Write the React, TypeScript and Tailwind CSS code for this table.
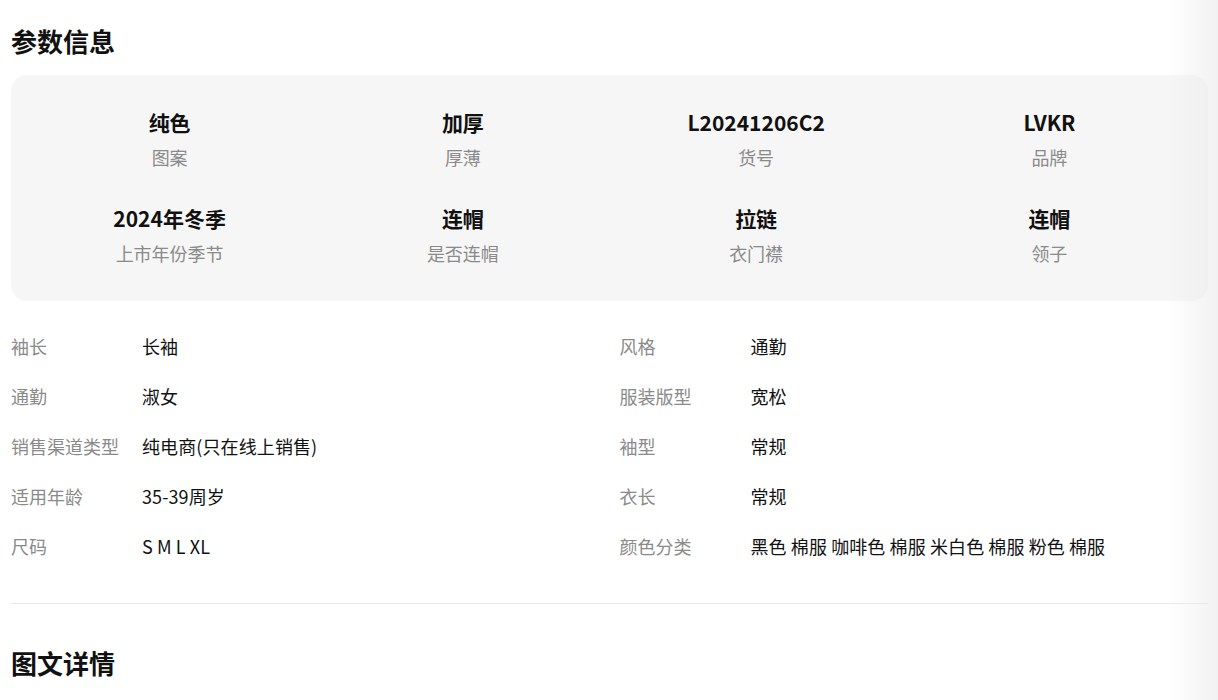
const summary = [
  { value: '纯色', label: '图案' },
  { value: '加厚', label: '厚薄' },
  { value: 'L20241206C2', label: '货号' },
  { value: 'LVKR', label: '品牌' },
  { value: '2024年冬季', label: '上市年份季节' },
  { value: '连帽', label: '是否连帽' },
  { value: '拉链', label: '衣门襟' },
  { value: '连帽', label: '领子' },
]

const specs = [
  ['袖长', '长袖'],
  ['风格', '通勤'],
  ['通勤', '淑女'],
  ['服装版型', '宽松'],
  ['销售渠道类型', '纯电商(只在线上销售)'],
  ['袖型', '常规'],
  ['适用年龄', '35-39周岁'],
  ['衣长', '常规'],
  ['尺码', 'S M L XL'],
  ['颜色分类', '黑色 棉服 咖啡色 棉服 米白色 棉服 粉色 棉服'],
]

export default function App() {
  return (
    <div
      className="relative min-h-[700px] bg-white pl-[11px] pr-[10px] text-[#111]"
      style={{ fontFamily: '"Noto Sans CJK SC", "Noto Sans", sans-serif' }}
    >
      <h2 className="pt-[23px] text-[26px] font-bold leading-[36px]">参数信息</h2>

      <div className="mt-[16px] grid grid-cols-4 gap-y-[33px] rounded-[16px] bg-[#f6f6f6] px-[12px] pt-[32px] pb-[35px]">
        {summary.map((item, i) => (
          <div key={i} className="flex flex-col items-center">
            <div className="text-[21px] font-bold leading-[30px] text-[#111]">{item.value}</div>
            <div className="mt-[7px] text-[18px] leading-[26px] text-[#8a8a8a]">{item.label}</div>
          </div>
        ))}
      </div>

      <div className="mt-[20px] grid grid-cols-2 gap-x-[20px]">
        {specs.map(([label, value], i) => (
          <div key={i} className="flex h-[50px] items-center text-[18px]">
            <span className="w-[131px] shrink-0 text-[#8a8a8a]">{label}</span>
            <span className="tracking-[0.1px] text-[#111]">{value}</span>
          </div>
        ))}
      </div>

      <div className="mt-[32px] h-px bg-[#e8e8e8]" />

      <h2 className="mt-[41px] text-[26px] font-bold leading-[36px]">图文详情</h2>

      {/* right edge fade */}
      <div className="pointer-events-none absolute inset-y-0 right-0 w-[50px] bg-gradient-to-r from-transparent to-[#ececec]/70" />
    </div>
  )
}
